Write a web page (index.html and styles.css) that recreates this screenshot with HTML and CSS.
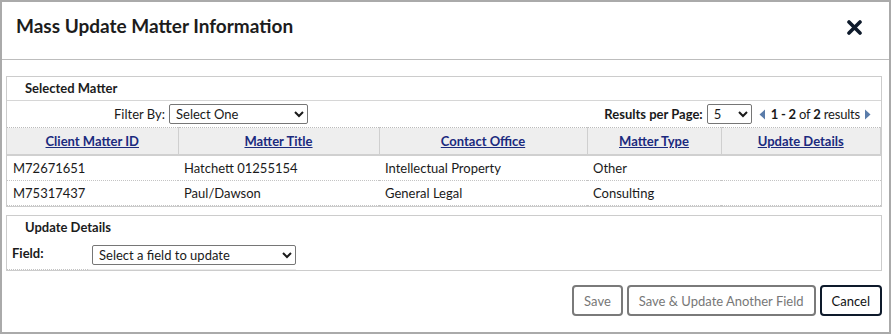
FILE: index.html
```html
<!DOCTYPE html>
<html>
<head>
<meta charset="utf-8">
<link rel="stylesheet" href="styles.css">
</head>
<body>
<div class="dialog">
  <div class="header">
    <div class="title">Mass Update Matter Information</div>
    <svg class="close" width="15" height="15" viewBox="0 0 15 15"><path d="M2 2 L13 13 M13 2 L2 13" stroke="#0e1a2b" stroke-width="3.6" stroke-linecap="round"/></svg>
  </div>
  <div class="body">
    <div class="panel">
      <div class="panel-head bordered">Selected Matter</div>
      <div class="filter-row">
        <div class="filter-left">
          <span class="filter-label">Filter By:</span>
          <select class="sel sel-filter"><option>Select One</option></select>
        </div>
        <div class="pager">
          <span class="rpp">Results per Page:</span>
          <select class="sel sel-rpp"><option>5</option></select>
          <svg class="tri" width="7" height="11" viewBox="0 0 7 11"><path d="M6 0.5 L6 10.5 L0.5 5.5 Z" fill="#5a7caa"/></svg>
          <span class="count"><b>1 - 2</b> of <b>2</b> results</span>
          <svg class="tri" width="7" height="11" viewBox="0 0 7 11"><path d="M1 0.5 L1 10.5 L6.5 5.5 Z" fill="#5a7caa"/></svg>
        </div>
      </div>
      <table class="grid">
        <colgroup>
          <col class="c1"><col class="c2"><col class="c3"><col class="c4"><col class="c5">
        </colgroup>
        <thead>
          <tr>
            <th><a href="#">Client Matter ID</a></th>
            <th><a href="#">Matter Title</a></th>
            <th><a href="#">Contact Office</a></th>
            <th><a href="#">Matter Type</a></th>
            <th><a href="#">Update Details</a></th>
          </tr>
        </thead>
        <tbody>
          <tr><td>M72671651</td><td>Hatchett 01255154</td><td>Intellectual Property</td><td>Other</td><td></td></tr>
          <tr><td>M75317437</td><td>Paul/Dawson</td><td>General Legal</td><td>Consulting</td><td></td></tr>
        </tbody>
      </table>
    </div>
    <div class="panel panel2">
      <div class="panel-head">Update Details</div>
      <div class="field-row">
        <div class="field-label">Field:</div>
        <div class="field-ctl"><select class="sel sel-field"><option>Select a field to update</option></select></div>
      </div>
    </div>
    <div class="actions">
      <button class="btn disabled">Save</button>
      <button class="btn disabled">Save &amp; Update Another Field</button>
      <button class="btn primary">Cancel</button>
    </div>
  </div>
</div>
</body>
</html>
```

FILE: styles.css
```css
html, body {
  margin: 0;
  padding: 0;
  background: #fff;
}
body {
  font-family: Lato, "Open Sans", sans-serif;
  font-size: 13px;
  color: #1a1a1a;
}
.dialog {
  width: 891px;
  height: 334px;
  box-sizing: border-box;
  border: 2px solid #aaaaaa;
  background: #fff;
}
.header {
  border-bottom: 1px solid #bdbdbd;
  display: flex;
  justify-content: space-between;
  align-items: flex-start;
  padding: 12px 27px 0 14px;
  box-sizing: content-box;
  height: 45px;
}
.title {
  font-size: 19px;
  line-height: 24px;
  font-weight: 700;
  color: #1c1c1c;
}
.close {
  margin-top: 6px;
}
.body {
  padding: 16px 7px 0 4px;
}
.panel {
  border: 1px solid #cccccc;
}
.panel-head {
  height: 23px;
  line-height: 23px;
  padding-left: 18px;
  font-weight: 700;
  color: #1c1c1c;
}
.panel-head.bordered {
  border-bottom: 1px solid #d6d6d6;
}
.filter-row {
  height: 26px;
  display: flex;
  justify-content: space-between;
  align-items: center;
  padding-right: 10px;
}
.filter-left {
  display: flex;
  align-items: center;
}
.filter-label {
  width: 158px;
  text-align: right;
  margin-right: 4px;
}
.sel {
  font-family: Lato, "Open Sans", sans-serif;
  font-size: 13px;
  height: 20px;
  border: 1px solid #767676;
  border-radius: 2px;
  background: #fff;
  color: #1a1a1a;
  padding: 0 0 0 2px;
  margin: 0;
}
.sel-filter { width: 139px; }
.sel-rpp { width: 45px; margin-left: 4px; margin-right: 7px; }
.sel-field { width: 204px; }
.pager {
  display: flex;
  align-items: center;
}
.rpp { font-weight: 700; }
.count { margin: 0 4px 0 5px; letter-spacing: -0.2px; }
.count b { font-weight: 700; }
.tri { display: block; }
.grid {
  width: 100%;
  border-collapse: collapse;
  table-layout: fixed;
}
.c1 { width: 171px; }
.c2 { width: 201px; }
.c3 { width: 208px; }
.c4 { width: 134px; }
.grid th {
  background: #eeeeee;
  height: 26px;
  border-top: 1px dotted #bbbbbb;
  border-bottom: 2px solid #d0d0d0;
  border-left: 1px solid #cfcfcf;
  border-right: 1px solid #cfcfcf;
  font-weight: 700;
  padding: 0;
  text-align: center;
}
.grid th:first-child { border-left: none; }
.grid th a {
  color: #1b2a7e;
  text-decoration: underline;
}
.grid td {
  height: 24px;
  padding: 0 0 0 6px;
  border-bottom: 1px dotted #c4c4c4;
  white-space: nowrap;
}
.panel2 {
  margin-top: 8px;
}
.panel2 .panel-head {
  height: 22px;
  line-height: 22px;
}
.field-row {
  display: flex;
  height: 32px;
}
.field-label {
  width: 76px;
  padding-left: 5px;
  font-weight: 700;
  line-height: 31px;
  border-bottom: 1px dotted #c4c4c4;
}
.field-ctl {
  width: 208px;
  padding-left: 4px;
  padding-top: 7px;
  box-sizing: border-box;
  border-bottom: 1px solid #ececec;
}
.actions {
  display: flex;
  justify-content: flex-end;
  gap: 4px;
  margin-top: 14px;
}
.btn {
  font-family: Lato, "Open Sans", sans-serif;
  font-size: 13px;
  height: 31px;
  padding: 0 10px;
  border-radius: 4px;
  background: #fff;
  margin: 0;
}
.btn.disabled {
  border: 2px solid #7a7a7a;
  color: #777777;
}
.btn.primary {
  border: 2px solid #0e1a2b;
  color: #111111;
  padding: 0 10px;
}
```
